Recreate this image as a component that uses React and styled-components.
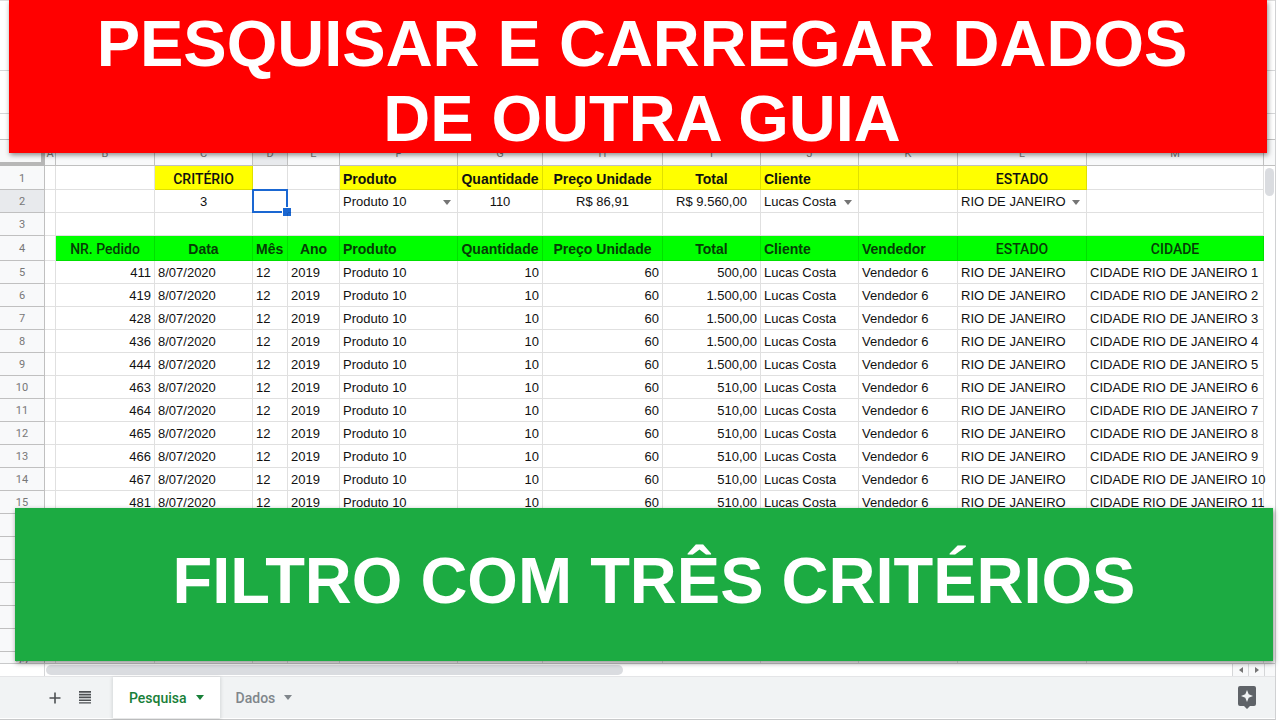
import React, { useState } from "react";
import styled, { createGlobalStyle } from "styled-components";

const columns = [
  { name: "A", width: 11 },
  { name: "B", width: 99 },
  { name: "C", width: 98 },
  { name: "D", width: 35 },
  { name: "E", width: 52 },
  { name: "F", width: 118 },
  { name: "G", width: 85 },
  { name: "H", width: 120 },
  { name: "I", width: 98 },
  { name: "J", width: 98 },
  { name: "K", width: 99 },
  { name: "L", width: 129 },
  { name: "M" },
];

const titles = [
  { text: "NR. Pedido", align: "center", medium: true },
  { text: "Data", align: "center" },
  { text: "Mês", align: "left" },
  { text: "Ano", align: "center" },
  { text: "Produto", align: "left" },
  { text: "Quantidade", align: "center" },
  { text: "Preço Unidade", align: "center" },
  { text: "Total", align: "center" },
  { text: "Cliente", align: "left" },
  { text: "Vendedor", align: "left" },
  { text: "ESTADO", align: "center", medium: true },
  { text: "CIDADE", align: "center", medium: true },
];

const orders = [
  [411, "500,00"],
  [419, "1.500,00"],
  [428, "1.500,00"],
  [436, "1.500,00"],
  [444, "1.500,00"],
  [463, "510,00"],
  [464, "510,00"],
  [465, "510,00"],
  [466, "510,00"],
  [467, "510,00"],
  [481, "510,00"],
];

const emptyRows = [16, 17, 18, 19, 20, 21, 22];

function Dropdown({ label, options }) {
  const [value, setvalue] = useState(options[0]);
  return (
    <SelectBox>
      <Select
        aria-label={label}
        value={value}
        onChange={(e) => setvalue(e.target.value)}
      >
        {options.map((o) => (
          <option key={o}>{o}</option>
        ))}
      </Select>
      <SelectArrow>
        <Caret />
      </SelectArrow>
    </SelectBox>
  );
}

function Sheet() {
  return (
    <Table>
      <colgroup>
        <col style={{ width: 45 }} />
        {columns.map((c) => (
          <col key={c.name} style={{ width: c.width }} />
        ))}
      </colgroup>
      <thead>
        <tr>
          <Corner />
          {columns.map((c) => (
            <HeadCell key={c.name} $active={c.name === "D"}>
              {c.name}
            </HeadCell>
          ))}
        </tr>
      </thead>
      <tbody>
        <Row $height={24}>
          <HeadCell>1</HeadCell>
          <Cell />
          <Cell />
          <TitleCell $fill="#ffff00" $align="center" $medium>CRITÉRIO</TitleCell>
          <Cell />
          <Cell />
          <TitleCell $fill="#ffff00">Produto</TitleCell>
          <TitleCell $fill="#ffff00" $align="center">Quantidade</TitleCell>
          <TitleCell $fill="#ffff00" $align="center">Preço Unidade</TitleCell>
          <TitleCell $fill="#ffff00" $align="center">Total</TitleCell>
          <TitleCell $fill="#ffff00">Cliente</TitleCell>
          <TitleCell $fill="#ffff00" />
          <TitleCell $fill="#ffff00" $align="center" $medium>ESTADO</TitleCell>
          <Cell />
        </Row>
        <Row>
          <HeadCell $active>2</HeadCell>
          <Cell />
          <Cell />
          <Cell $align="center">3</Cell>
          <Cell>
            <Selection />
          </Cell>
          <Cell />
          <Cell>
            <Dropdown label="Produto" options={["Produto 10"]} />
          </Cell>
          <Cell $align="center">110</Cell>
          <Cell $align="center">R$ 86,91</Cell>
          <Cell $align="center">R$ 9.560,00</Cell>
          <Cell>
            <Dropdown label="Cliente" options={["Lucas Costa"]} />
          </Cell>
          <Cell />
          <Cell>
            <Dropdown label="Estado" options={["RIO DE JANEIRO"]} />
          </Cell>
          <Cell />
        </Row>
        <Row>
          <HeadCell>3</HeadCell>
          {columns.map((c) => (
            <Cell key={c.name} />
          ))}
        </Row>
        <Row $height={25}>
          <HeadCell>4</HeadCell>
          <Cell />
          {titles.map((t) => (
            <TitleCell key={t.text} $fill="#00ff00" $align={t.align} $medium={t.medium}>
              {t.text}
            </TitleCell>
          ))}
        </Row>
        {orders.map(([id, total], i) => (
          <Row key={id}>
            <HeadCell>{i + 5}</HeadCell>
            <Cell />
            <Cell $align="right">{id}</Cell>
            <Cell>8/07/2020</Cell>
            <Cell>12</Cell>
            <Cell>2019</Cell>
            <Cell>Produto 10</Cell>
            <Cell $align="right">10</Cell>
            <Cell $align="right">60</Cell>
            <Cell $align="right">{total}</Cell>
            <Cell>Lucas Costa</Cell>
            <Cell>Vendedor 6</Cell>
            <Cell>RIO DE JANEIRO</Cell>
            <Cell>CIDADE RIO DE JANEIRO {i + 1}</Cell>
          </Row>
        ))}
        {emptyRows.map((n) => (
          <Row key={n}>
            <HeadCell>{n}</HeadCell>
            {columns.map((c) => (
              <Cell key={c.name} />
            ))}
          </Row>
        ))}
      </tbody>
    </Table>
  );
}

export default function App() {
  return (
    <>
      <GlobalStyle />
      <Page>
        <Window>
          <MenuArea />
          <Toolbar />
          <FormulaBar />
          <Main>
            <SheetArea>
              <Sheet />
            </SheetArea>
            <VerticalScroll>
              <VerticalThumb />
            </VerticalScroll>
          </Main>
          <HorizontalScroll>
            <ScrollTrack>
              <HorizontalThumb />
            </ScrollTrack>
            <ScrollButton aria-label="Rolar para a esquerda">
              <svg width="4" height="6" viewBox="0 0 4 6"><path d="M4 0v6L0 3z" /></svg>
            </ScrollButton>
            <ScrollButton aria-label="Rolar para a direita">
              <svg width="4" height="6" viewBox="0 0 4 6"><path d="M0 0v6l4-3z" /></svg>
            </ScrollButton>
            <ScrollEnd />
          </HorizontalScroll>
          <TabBar>
            <TabTools>
              <IconButton aria-label="Adicionar página">
                <svg width="12" height="12" viewBox="0 0 12 12">
                  <path d="M5.200 .5h1.600v4.700h4.700v1.600H6.800v4.700H5.200V6.800H.5V5.200h4.700z" />
                </svg>
              </IconButton>
              <IconButton aria-label="Todas as páginas">
                <svg width="12" height="13" viewBox="0 0 12 13">
                  <path d="M0 0h12v1.700H0zM0 2.800h12v1.700H0zM0 5.600h12v1.700H0zM0 8.400h12v1.700H0zM0 11.200h12v1.300H0z" />
                </svg>
              </IconButton>
            </TabTools>
            <Tab $active>
              Pesquisa <Caret />
            </Tab>
            <Tab>
              Dados <Caret />
            </Tab>
            <ExploreButton aria-label="Explorar">
              <svg width="18" height="23" viewBox="0 0 18 23">
                <path
                  fillRule="evenodd"
                  d="M2 0h14a2 2 0 0 1 2 2v16a2 2 0 0 1-2 2h-4l-3 3-3-3H2a2 2 0 0 1-2-2V2a2 2 0 0 1 2-2zM9 4L7.300 8.300 3 10l4.300 1.700L9 16l1.700-4.300L15 10l-4.300-1.700z"
                />
              </svg>
            </ExploreButton>
          </TabBar>
        </Window>
        <TopBanner>
          PESQUISAR E CARREGAR DADOS
          <br />
          DE OUTRA GUIA
        </TopBanner>
        <BottomBanner>FILTRO COM TRÊS CRITÉRIOS</BottomBanner>
      </Page>
    </>
  );
}

const Caret = () => (
  <svg width="8" height="5" viewBox="0 0 8 5" fill="currentColor">
    <path d="M0 0h8L4 5z" />
  </svg>
);

const GlobalStyle = createGlobalStyle`
  * {
    box-sizing: border-box;
  }
  body {
    margin: 0;
    background: #fff;
    font-family: "Liberation Sans", Arial, sans-serif;
  }
  button {
    border: 0;
    padding: 0;
    background: none;
    cursor: pointer;
  }
`;

const Page = styled.div`
  position: relative;
  height: 100vh;
  overflow: hidden;
  padding-right: 4px;
`;

const Window = styled.div`
  display: flex;
  flex-direction: column;
  height: 100%;
  border-right: 1px solid #d0d1d3;
  border-bottom: 1px solid #c8c9ca;
`;

const MenuArea = styled.div`
  flex: none;
  height: 71px;
  border-top: 1px solid #dcdcdc;
  border-bottom: 1px solid #d5d6d8;
`;

const Toolbar = styled.div`
  flex: none;
  height: 43px;
  border-bottom: 1px solid #d5d6d8;
`;

const FormulaBar = styled.div`
  flex: none;
  height: 26px;
  border-bottom: 1px solid #c0c0c0;
`;

const Main = styled.div`
  flex: 1;
  min-height: 0;
  display: flex;
`;

/* only cut off at the bottom, a long city name may run over the last grid line */
const SheetArea = styled.div`
  flex: 1;
  min-width: 0;
  overflow-x: visible;
  overflow-y: clip;
`;

const Table = styled.table`
  width: 100%;
  table-layout: fixed;
  border-collapse: separate;
  border-spacing: 0;
`;

const Corner = styled.td`
  height: 26px;
  padding: 0;
  background: #f8f9fa;
  border-right: 4px solid #b7b7b7;
  border-bottom: 4px solid #b7b7b7;
`;

const Row = styled.tr`
  height: ${(p) => p.$height || 23}px;
`;

const HeadCell = styled.th`
  padding: 2px 0 0;
  background: ${(p) => (p.$active ? "#e8eaed" : "#f8f9fa")};
  border-right: 1px solid #c0c0c0;
  border-bottom: 1px solid #c0c0c0;
  font: 400 11px/16px Roboto, sans-serif;
  color: #777;
`;

const Cell = styled.td`
  position: relative;
  padding: 2px 3px 0;
  border-right: 1px solid rgba(0, 0, 0, 0.12);
  border-bottom: 1px solid rgba(0, 0, 0, 0.12);
  font-size: 13px;
  line-height: 16px;
  color: #111;
  text-align: ${(p) => p.$align || "left"};
  white-space: nowrap;
`;

const TitleCell = styled(Cell)`
  background: ${(p) => p.$fill};
  font-family: ${(p) => (p.$medium ? "Roboto, sans-serif" : "inherit")};
  font-size: 14px;
  font-weight: ${(p) => (p.$medium ? 500 : 700)};
  color: ${(p) => (p.$fill === "#00ff00" ? "#063c06" : "#111")};
`;

// blue box round the active cell, with the fill handle in its corner
const Selection = styled.div`
  position: absolute;
  inset: -1px;
  border: 2px solid #1a67d2;

  &::after {
    content: "";
    position: absolute;
    right: -6px;
    bottom: -6px;
    width: 8px;
    height: 8px;
    border: 1px solid #fff;
    background: #1a67d2;
  }
`;

const SelectBox = styled.div`
  position: relative;
`;

const Select = styled.select`
  display: block;
  width: 100%;
  height: 16px;
  padding: 0;
  border: 0;
  appearance: none;
  background: none;
  font: inherit;
  color: inherit;
`;

const SelectArrow = styled.span`
  position: absolute;
  top: 0;
  right: 3px;
  height: 100%;
  display: flex;
  align-items: center;
  color: #757575;
  pointer-events: none;
`;

const VerticalScroll = styled.div`
  flex: none;
  width: 11px;
  padding: 28px 1px 0;
  background: linear-gradient(#f8f9fa 25px, #c0c0c0 25px, #c0c0c0 26px, #fff 26px);
`;

const VerticalThumb = styled.div`
  height: 28px;
  border-radius: 5px;
  background: #dadce0;
`;

const HorizontalScroll = styled.div`
  flex: none;
  display: flex;
  height: 13px;
  border-top: 1px solid #c8c9ca;
`;

const ScrollTrack = styled.div`
  flex: 1;
  margin-left: 44px;
  padding: 1px;
  border-left: 1px solid #d5d6d8;
`;

const HorizontalThumb = styled.div`
  width: 48.7%;
  height: 10px;
  border-radius: 5px;
  background: #dadce0;
`;

const ScrollButton = styled.button`
  width: 16px;
  display: flex;
  align-items: center;
  justify-content: center;
  border-left: 1px solid #d5d6d8;
  background: #f8f9fa;
  fill: #757575;
`;

const ScrollEnd = styled.div`
  width: 11px;
  border-left: 1px solid #d5d6d8;
  background: #f8f9fa;
`;

const TabBar = styled.div`
  flex: none;
  display: flex;
  height: 43px;
  background: #f1f3f4;
  border-top: 1px solid #e4e5e7;
  border-bottom: 1px solid #fff;
`;

const TabTools = styled.div`
  width: 113px;
  display: flex;
  align-items: center;
  gap: 18px;
  padding-left: 49px;
`;

const IconButton = styled.button`
  display: flex;
  fill: #4d5053;
`;

const Tab = styled.button`
  display: flex;
  align-items: center;
  gap: 9px;
  padding: 0 16px;
  background: ${(p) => (p.$active ? "#fff" : "none")};
  box-shadow: ${(p) => (p.$active ? "0 1px 3px 1px rgba(60, 64, 67, 0.15)" : "none")};
  font: 500 14px/20px Roboto, sans-serif;
  color: ${(p) => (p.$active ? "#188038" : "#80868b")};
`;

const ExploreButton = styled.button`
  display: flex;
  align-items: center;
  margin-left: auto;
  padding-right: 19px;
  fill: #5f6368;
`;

const Banner = styled.div`
  position: absolute;
  display: flex;
  align-items: center;
  justify-content: center;
  height: 153px;
  font-size: 65px;
  font-weight: bold;
  line-height: 75px;
  text-align: center;
  white-space: nowrap;
  color: #fff;
  box-shadow: 1px 2px 5px rgba(0, 0, 0, 0.45);
`;

const TopBanner = styled(Banner)`
  top: 0;
  left: 9px;
  right: 13px;
  padding: 8px 0 0 8px;
  background: #ff0000;
`;

const BottomBanner = styled(Banner)`
  bottom: 59px;
  left: 15px;
  right: 7px;
  padding: 0 0 8px 20px;
  background: #1cab42;
`;
